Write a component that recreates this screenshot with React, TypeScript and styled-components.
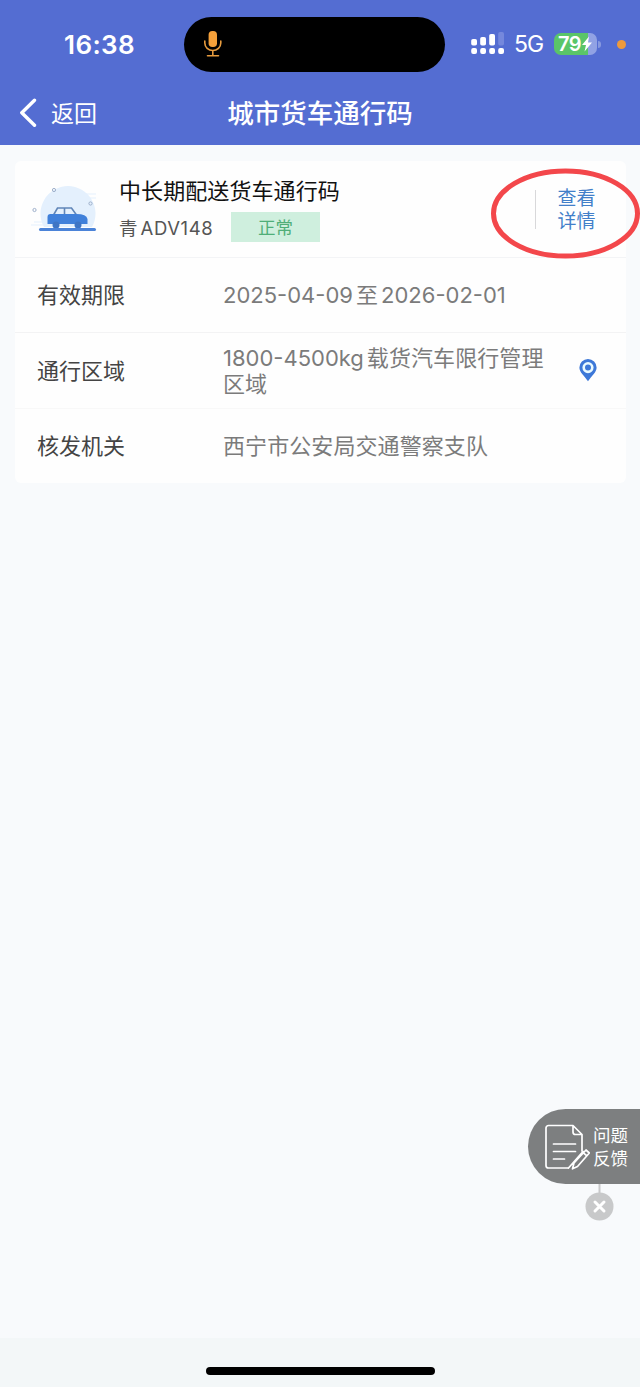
import React from 'react';
import styled, { createGlobalStyle } from 'styled-components';

const GlobalStyle = createGlobalStyle`
  *, *::before, *::after { box-sizing: border-box; }
  body { margin: 0; background: #f8fafc; }
`;

const Screen = styled.div`
  position: relative;
  display: flex;
  flex-direction: column;
  width: 640px;
  height: 1387px;
  overflow: hidden;
  background: #f8fafc;
  font-family: Inter, 'Noto Sans CJK SC', sans-serif;
`;

const Header = styled.header`
  height: 145px;
  flex: none;
  background: #546dd2;
  color: #fff;
`;

const StatusBar = styled.div`
  display: flex;
  align-items: center;
  height: 88px;
  padding-left: 64px;
`;

const Clock = styled.span`
  width: 120px;
  font-size: 26px;
  font-weight: 600;
  letter-spacing: 0.4px;
`;

const Island = styled.div`
  display: flex;
  align-items: center;
  width: 261px;
  height: 55px;
  padding-left: 18.5px;
  border-radius: 28px;
  background: #000;
`;

const Signal = styled.svg`
  margin-left: 26px;
`;

const Network = styled.span`
  width: 40px;
  margin-left: 9px;
  font-size: 23px;
  letter-spacing: -0.9px;
`;

const Battery = styled.div`
  display: flex;
  align-items: center;
  width: 43px;
  height: 22px;
  padding-left: 4px;
  border-radius: 7px;
  background: linear-gradient(to right, #5ac568 79%, #91a2e4 79%);
  font-size: 20px;
  font-weight: 600;
  letter-spacing: -0.5px;
`;

const BatteryTip = styled.span`
  width: 3px;
  height: 7px;
  margin-left: 1px;
  border-radius: 0 3px 3px 0;
  background: #8799df;
`;

const PrivacyDot = styled.span`
  width: 9px;
  height: 9px;
  margin-left: 16px;
  border-radius: 50%;
  background: #ee9a3c;
`;

const NavBar = styled.nav`
  display: grid;
  grid-template-columns: 1fr auto 1fr;
  align-items: center;
  height: 50px;
  padding: 0 19px;
`;

const Back = styled.a`
  display: flex;
  align-items: center;
  gap: 14px;
  font-size: 23px;
  line-height: 30px;

  span {
    padding-top: 2px;
  }
`;

const PageTitle = styled.h1`
  margin: 0;
  font-size: 26.5px;
  line-height: 40px;
  font-weight: 500;
`;

const Card = styled.section`
  margin: 16px 14.5px 0 15px;
  border-radius: 6px;
  background: #fefefe;
`;

const CardHead = styled.div`
  display: flex;
  height: 97px;
  border-bottom: 1px solid #f3f4f6;
`;

const CarArt = styled.svg`
  flex: none;
  margin: 16px 0 0 15px;
`;

const PassInfo = styled.div`
  flex: 1;
  padding: 14px 0 0 7px;
`;

const PassName = styled.h2`
  margin: 0;
  font-size: 22px;
  line-height: 32px;
  font-weight: 400;
  letter-spacing: 0.08px;
  color: #111;
`;

const PlateLine = styled.div`
  display: flex;
  align-items: center;
  height: 30px;
  margin-top: 5px;
  color: #555;
  font-size: 18.5px;
`;

const Plate = styled.span`
  width: 112px;
`;

const Latin = styled.span<{ $gap?: number; $after?: number; $track?: number }>`
  margin-left: ${(p) => p.$gap ?? 0}px;
  margin-right: ${(p) => p.$after ?? 0}px;
  letter-spacing: ${(p) => p.$track ?? 0}px;
`;

const Status = styled.span`
  width: 89px;
  height: 30px;
  background: #cfefde;
  color: #4fae78;
  font-size: 17.5px;
  line-height: 31px;
  text-align: center;
`;

const Detail = styled.a`
  display: flex;
  align-items: center;
  align-self: flex-start;
  width: 91px;
  height: 39px;
  margin-top: 29px;
  padding-left: 22px;
  border-left: 1px solid #d8d8da;
  color: #427fc9;
  font-size: 19px;
  line-height: 23px;
`;

const Row = styled.div<{ $height: number; $line?: string }>`
  display: flex;
  align-items: center;
  height: ${(p) => p.$height}px;
  padding-left: 22px;
  border-bottom: ${(p) => (p.$line ? `1px solid ${p.$line}` : 'none')};
  font-size: 22px;
  line-height: 26px;
`;

const Label = styled.span`
  width: 186px;
  color: #444;
`;

const Value = styled.span`
  width: 340px;
  color: #7b7b7b;
  letter-spacing: 0.08px;
`;

const Pin = styled.svg`
  margin-left: 16px;
`;

const Mark = styled.svg`
  position: absolute;
  left: 488px;
  top: 165px;
`;

const Feedback = styled.aside`
  position: absolute;
  right: 0;
  top: 1109px;
  display: flex;
  flex-direction: column;
  width: 112px;
`;

const FeedbackPill = styled.div`
  display: flex;
  align-items: center;
  gap: 3px;
  height: 75px;
  padding-left: 16px;
  border-radius: 38px 0 0 38px;
  background: #7d7f80;
  color: #fff;
  font-size: 17.5px;
  line-height: 23px;
`;

const CloseArt = styled.svg`
  margin-left: 56px;
`;

const HomeArea = styled.footer`
  display: flex;
  justify-content: center;
  height: 49px;
  margin-top: auto;
  padding-top: 29px;
  background: #f3f7f8;
`;

const HomeBar = styled.div`
  width: 229px;
  height: 8px;
  border-radius: 4px;
  background: #000;
`;

const dotColumns = [0, 9, 18, 27];

export default function App() {
  return (
    <Screen>
      <GlobalStyle />
      <Header>
        <StatusBar>
          <Clock>16:38</Clock>
          <Island>
            <svg width="20" height="28" viewBox="0 0 20 28" fill="none" stroke="#e79b3e" strokeWidth="1.6" strokeLinecap="round">
              <rect x="5.6" y="1" width="8.4" height="16" rx="3.8" fill="#f5a03a" stroke="none" />
              <path d="M1.800 11v2a8 7.500 0 0 0 16 0v-2M9.800 20.500v5M4.500 25.700h11" />
            </svg>
          </Island>
          <Signal width="34" height="24" viewBox="0 0 34 24" fill="#fff">
            {dotColumns.map((x) => (
              <rect key={x} x={x + 0.2} y="16" width="5.800" height="6" rx="2" />
            ))}
            <rect x="0.200" y="7" width="5.800" height="6.500" rx="1.800" />
            <rect x="9.200" y="5" width="5.800" height="8.500" rx="1.800" />
            <rect x="18.200" y="2" width="5.800" height="11.500" rx="1.800" />
            <rect x="27.200" y="0" width="5.800" height="13.500" rx="1.800" fill="#7588dc" />
          </Signal>
          <Network>5G</Network>
          <Battery>
            79
            <svg width="12" height="16" viewBox="0 0 11 16" fill="#fff">
              <path d="M7.500 0.500 0.500 9h4L3 15.500 10.500 6.500h-4z" />
            </svg>
          </Battery>
          <BatteryTip />
          <PrivacyDot />
        </StatusBar>
        <NavBar>
          <Back>
            <svg width="18" height="30" viewBox="0 0 18 30" fill="none" stroke="#fff" strokeWidth="3.400" strokeLinecap="round" strokeLinejoin="round">
              <path d="M15.500 2.200 2.800 14.700l12.700 12.500" />
            </svg>
            <span>返回</span>
          </Back>
          <PageTitle>城市货车通行码</PageTitle>
        </NavBar>
      </Header>

      <Card>
        <CardHead>
          <CarArt width="82" height="62" viewBox="0 0 82 62" fill="none">
            <path d="M14 50A27.500 27.500 0 1 1 62 50z" fill="#e4f0fd" />
            <path d="M50 17h16M56 21h10M1 48h16M4 45h8" stroke="#e4f0fd" strokeWidth="1" />
            <g stroke="#9eb0cb" strokeWidth="1">
              <circle cx="24" cy="13" r="1.600" />
              <circle cx="4.500" cy="33" r="1.600" />
              <circle cx="60.500" cy="26.500" r="1.600" />
            </g>
            <path d="M23.500 38 27.500 31h14l5 7M34.500 31v7" stroke="#6085b8" strokeWidth="1.600" />
            <path d="M17.500 40q0-3 3-3h26q10 0 11 5v5h-40z" fill="#4080da" />
            <circle cx="26" cy="48" r="3.500" fill="#3f75c4" />
            <circle cx="48" cy="48" r="3.500" fill="#3f75c4" />
            <path d="M10.500 52.500h54" stroke="#4b83d8" strokeWidth="3" strokeLinecap="round" />
          </CarArt>
          <PassInfo>
            <PassName>中长期配送货车通行码</PassName>
            <PlateLine>
              <Plate>
                青<Latin $gap={3} $track={0.6}>ADV148</Latin>
              </Plate>
              <Status>正常</Status>
            </PlateLine>
          </PassInfo>
          <Detail>
            查看
            <br />
            详情
          </Detail>
        </CardHead>
        <Row $height={75} $line="#f3f3f4">
          <Label>有效期限</Label>
          <Value>
            <Latin $after={3}>2025-04-09</Latin>至<Latin $gap={3}>2026-02-01</Latin>
          </Value>
        </Row>
        <Row $height={76} $line="#f8f8f8">
          <Label>通行区域</Label>
          <Value>
            <Latin $after={3}>1800-4500kg</Latin>载货汽车限行管理
            <br />
            区域
          </Value>
          <Pin width="18" height="24" viewBox="0 0 18 24">
            <path d="M9 0a8.600 8.600 0 0 0-8.600 8.700C.4 13 5 16.500 9 22.200c4-5.700 8.600-9.200 8.600-13.500A8.600 8.600 0 0 0 9 0z" fill="#3d78d8" />
            <circle cx="9" cy="8.600" r="4.300" fill="#3d78d8" stroke="#e9faff" strokeWidth="2.600" />
          </Pin>
        </Row>
        <Row $height={74}>
          <Label>核发机关</Label>
          <Value>西宁市公安局交通警察支队</Value>
        </Row>
      </Card>

      <HomeArea>
        <HomeBar />
      </HomeArea>

      <Mark width="152" height="96" viewBox="0 0 152 96" fill="none">
        <ellipse cx="77.500" cy="48.500" rx="72" ry="42.500" stroke="#f3474b" strokeWidth="5" />
      </Mark>

      <Feedback>
        <FeedbackPill>
          <svg width="46" height="48" viewBox="0 0 46 48" fill="none" stroke="#fff" strokeWidth="1.700" strokeLinejoin="round" strokeLinecap="round">
            <path d="M24 45H4.500a2.500 2.500 0 0 1-2.500-2.500V5a2.500 2.500 0 0 1 2.500-2.500H29l9 9V28M29 2.500v6.500a2.500 2.500 0 0 0 2.500 2.500H38M9.500 21h22M9.500 28.500h22M9.500 36h11" />
            <path d="M24.500 45 39 28.500M28.500 45.800 30 40 42 27 45.300 30 33.500 43.500zM39.500 29.800l3.300 3" />
          </svg>
          <span>
            问题
            <br />
            反馈
          </span>
        </FeedbackPill>
        <CloseArt width="30" height="38" viewBox="0 0 30 38">
          <path d="M15.500 0v10" stroke="#c8c9ca" strokeWidth="2" />
          <circle cx="15.500" cy="22.500" r="14" fill="#c8c9ca" />
          <path d="m11 18 9 9m0-9-9 9" stroke="#fff" strokeWidth="3" strokeLinecap="round" />
        </CloseArt>
      </Feedback>
    </Screen>
  );
}
